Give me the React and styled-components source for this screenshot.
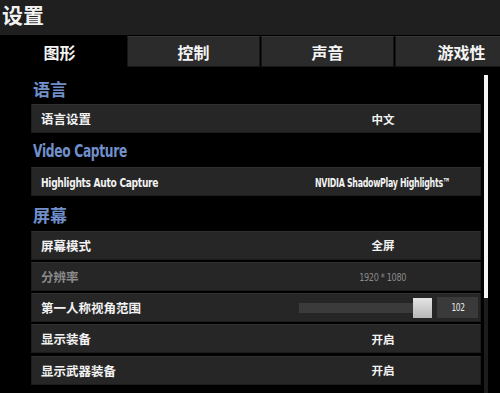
import React from "react";
import styled, { createGlobalStyle } from "styled-components";

const Global = createGlobalStyle`
html, body {
  margin: 0;
  padding: 0;
  background: #000;
}
body {
  width: 500px;
  height: 393px;
  overflow: hidden;
  font-family: "Noto Sans CJK SC", "Noto Sans", sans-serif;
}
`;

const narrow = '"DejaVu Sans", "Liberation Sans", sans-serif';

const Page = styled.div`
width: 500px;
height: 393px;
background: #000;
display: flex;
flex-direction: column;
overflow: hidden;
`;

const TitleBar = styled.div`
height: 35px;
flex: none;
background: #1f1f1f;
color: #f2f2f2;
font-size: 21px;
font-weight: 700;
line-height: 28px;
padding-left: 2px;
box-sizing: border-box;
`;

const TabRow = styled.div`
height: 32px;
flex: none;
display: flex;
margin-left: -7px;
padding-top: 1px;
box-sizing: border-box;
`;

const Tab = styled.div`
width: 133px;
flex: none;
box-sizing: border-box;
display: flex;
align-items: center;
justify-content: center;
font-size: 16px;
font-weight: 700;
color: #f4f4f4;
background: ${p => (p.$active ? "#000" : "#2b2b2b")};
border: ${p => (p.$active ? "none" : "1px solid #161616")};
border-top-color: #383838;
margin-right: 1px;
`;

const Content = styled.div`
position: relative;
flex: 1;
padding: 5px 19px 0 31px;
`;

const Heading = styled.div`
height: 32px;
display: flex;
align-items: center;
color: #7190cb;
font-size: 17px;
font-weight: 700;
padding-left: 2px;
white-space: nowrap;
`;

/* condensed latin text, squeezed to match the game's narrow face */
const Squeeze = styled.span`
display: inline-block;
font-family: ${narrow};
font-stretch: condensed;
font-weight: 700;
letter-spacing: -0.4px;
transform: scaleX(${p => p.$k || 0.82});
transform-origin: ${p => p.$origin || "left"} center;
`;

const Row = styled.div`
height: 29px;
margin-bottom: 2.25px;
box-sizing: border-box;
display: flex;
align-items: center;
background: #262626;
border: 1px solid #1c1c1c;
border-top-color: #303030;
`;

const Label = styled.div`
flex: 1;
padding-left: 9px;
white-space: nowrap;
font-size: 12.5px;
font-weight: 700;
color: ${p => (p.$dim ? "#8a8a8a" : "#f2f2f2")};
`;

const Value = styled.div`
width: 194px;
text-align: center;
white-space: nowrap;
font-size: 11.5px;
font-weight: 700;
color: ${p => (p.$dim ? "#8a8a8a" : "#f2f2f2")};
`;

const SliderWrap = styled.div`
display: flex;
align-items: center;
margin-right: 2px;
`;

const Track = styled.div`
width: 116px;
height: 10px;
background: #3b3b3b;
`;

const Thumb = styled.div`
width: 19px;
height: 20px;
margin-left: -2px;
background: linear-gradient(#e4e4e4, #b8b8b8);
`;

const NumBox = styled.div`
width: 41px;
height: 21px;
margin-left: 5px;
background: #3a3a3a;
color: #eaeaea;
font-size: 10px;
display: flex;
align-items: center;
justify-content: center;
`;

const ScrollTrack = styled.div`
position: absolute;
left: 484px;
top: 8px;
bottom: 0;
width: 4px;
background: #1c1c1c;
`;

const ScrollThumb = styled.div`
width: 4px;
height: 223px;
background: #f4f4f4;
`;

export default function App() {
  return (
    <Page>
      <Global />
      <TitleBar>设置</TitleBar>
      <TabRow>
        <Tab $active>图形</Tab>
        <Tab>控制</Tab>
        <Tab>声音</Tab>
        <Tab>游戏性</Tab>
      </TabRow>
      <Content>
        <Heading>语言</Heading>
        <Row>
          <Label>语言设置</Label>
          <Value>中文</Value>
        </Row>
        <Heading>
          <Squeeze $k={0.8}>Video Capture</Squeeze>
        </Heading>
        <Row>
          <Label>
            <Squeeze $k={0.78} style={{ fontSize: 13 }}>Highlights Auto Capture</Squeeze>
          </Label>
          <Value>
            <Squeeze $k={0.73} $origin="center" style={{ fontSize: 12 }}>NVIDIA ShadowPlay Highlights™</Squeeze>
          </Value>
        </Row>
        <Heading>屏幕</Heading>
        <Row>
          <Label>屏幕模式</Label>
          <Value>全屏</Value>
        </Row>
        <Row>
          <Label $dim>分辨率</Label>
          <Value $dim>
            <Squeeze $origin="center" style={{ fontSize: 11, fontWeight: 400 }}>1920 * 1080</Squeeze>
          </Value>
        </Row>
        <Row>
          <Label>第一人称视角范围</Label>
          <SliderWrap>
            <Track />
            <Thumb />
            <NumBox>
              <Squeeze $origin="center" style={{ fontWeight: 400 }}>102</Squeeze>
            </NumBox>
          </SliderWrap>
        </Row>
        <Row>
          <Label>显示装备</Label>
          <Value>开启</Value>
        </Row>
        <Row>
          <Label>显示武器装备</Label>
          <Value>开启</Value>
        </Row>
        <ScrollTrack>
          <ScrollThumb />
        </ScrollTrack>
      </Content>
    </Page>
  );
}
